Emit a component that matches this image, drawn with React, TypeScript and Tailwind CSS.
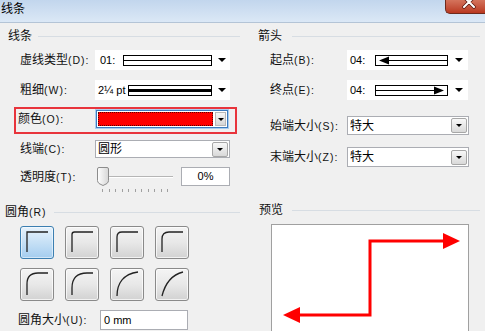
import React from 'react'

const FONT = { fontFamily: '"Liberation Sans", "Noto Sans CJK SC", sans-serif' }

function Caret({ small }: { small?: boolean }) {
  return small ? (
    <span className="h-0 w-0 border-x-[3px] border-t-[3px] border-x-transparent border-t-black" />
  ) : (
    <span className="h-0 w-0 border-x-[4px] border-t-[4px] border-x-transparent border-t-black" />
  )
}

function DropButton() {
  return (
    <div className="flex h-[15px] w-[16px] items-center justify-center rounded-[2px] border border-[#a7a7a7] bg-linear-to-b from-[#f8f8f8] to-[#d9d9d9]">
      <Caret small />
    </div>
  )
}

function Label({ text, keyName, width }: { text: string; keyName: string; width: string }) {
  return (
    <div className={`${width} shrink-0 whitespace-nowrap text-[12px] leading-none text-[#111]`}>
      {text}
      <span className="text-[10.5px] tracking-[1px]">({keyName}):</span>
    </div>
  )
}

function SectionHeader({ title, pad, gap }: { title: React.ReactNode; pad: string; gap: string }) {
  return (
    <div className={`flex h-[14px] items-center pr-[5px] ${pad}`}>
      <span className="whitespace-nowrap text-[12px] leading-none text-[#111]">{title}</span>
      <div className={`h-px flex-1 bg-[#d7dde3] ${gap}`} />
    </div>
  )
}

function SelectBox({ value, width, height }: { value: string; width: string; height: string }) {
  return (
    <div className={`flex ${width} ${height} items-center justify-between border border-[#abadb3] bg-white pl-[2px] pr-px`}>
      <span className="text-[12px] leading-none text-black">{value}</span>
      <DropButton />
    </div>
  )
}

function CornerButton({ d, selected }: { d: string; selected?: boolean }) {
  return (
    <div
      className={
        selected
          ? 'h-[33px] w-[34px] rounded-[3px] border border-[#3c7fb1] bg-linear-to-b from-[#e8f3fc] to-[#a4cdef] shadow-[inset_0_0_0_1px_rgba(255,255,255,0.5)]'
          : 'h-[33px] w-[34px] rounded-[3px] border border-[#8a8a8a] bg-linear-to-b from-[#f4f4f4] via-[#e8e8e8] to-[#d2d2d2] shadow-[inset_0_0_0_1px_rgba(255,255,255,0.7)]'
      }
    >
      <svg width="32" height="31" viewBox="0 0 32 31">
        <path d={d} fill="none" stroke="#222" strokeWidth="1.3" />
      </svg>
    </div>
  )
}

const corners = [
  'M6 25 V5 H27',
  'M6 25 V7.5 Q6 5 8.5 5 H27',
  'M6 25 V10 Q6 5 11 5 H27',
  'M6 25 V12 Q6 5 13 5 H27',
  'M6 26 V15 Q6 4 17 4 H27',
  'M6 26 V19 Q6 4 21 4 H27',
  'M6 27 C6 15 12 5 27 3',
  'M6 27 C9 15 15 6 27 3',
]

function LineStyleCombo({
  prefix,
  prefixWidth,
  pad,
  boxWidth,
  width,
  children,
}: {
  prefix: string
  prefixWidth: string
  pad: string
  boxWidth: string
  width: string
  children: React.ReactNode
}) {
  return (
    <div className={`flex h-[20px] ${width} items-center bg-white ${pad}`}>
      <span className={`${prefixWidth} whitespace-nowrap text-[11px] leading-none text-black`}>{prefix}</span>
      <div className={`relative flex h-[11px] ${boxWidth} items-center border border-black`}>{children}</div>
      <div className="flex flex-1 justify-center pl-[2px]">
        <Caret />
      </div>
    </div>
  )
}

function Ticks() {
  return (
    <div className="ml-[7px] flex w-[66px] justify-between">
      {Array.from({ length: 11 }).map((_, i) => (
        <div key={i} className="h-[3px] w-px bg-[#a0a0a0]" />
      ))}
    </div>
  )
}

export default function App() {
  return (
    <div className="relative h-[331px] w-[485px] overflow-hidden bg-[#f0f0f0]" style={FONT}>
      {/* Title bar */}
      <div className="flex h-[23px] items-start justify-between border-b border-[#b4c4d6] bg-linear-to-b from-[#c2d6ed] to-[#dbe8f6]">
        <span className="ml-px mt-[2px] text-[12px] leading-[14px] text-black">线条</span>
        <div className="relative h-[14px] w-[40px] overflow-hidden rounded-bl-[5px] border-b border-l border-[#6e2a1c] bg-linear-to-b from-[#d4735c] to-[#b9371f]">
          <svg className="absolute left-0 top-0" width="40" height="14" viewBox="0 0 40 14">
            <path d="M18 -3 L28 7 M28 -3 L18 7" stroke="#5a1a10" strokeWidth="3.5" strokeLinecap="round" />
            <path d="M18 -3 L28 7 M28 -3 L18 7" stroke="#fff" strokeWidth="2" strokeLinecap="round" />
          </svg>
        </div>
      </div>

      <div className="flex">
        {/* Left column */}
        <div className="flex w-[245px] flex-col">
          <div className="mt-[6px]">
            <SectionHeader title="线条" pad="pl-[8px]" gap="ml-[6px]" />
          </div>

          <div className="mt-[7px] flex h-[20px] items-center pl-[20px]">
            <Label text="虚线类型" keyName="D" width="w-[75px]" />
            <LineStyleCombo prefix="01:" prefixWidth="w-[23px]" pad="pl-[5px]" boxWidth="w-[89px]" width="w-[135px]">
              <div className="h-px w-full bg-black" />
            </LineStyleCombo>
          </div>

          <div className="mt-[10px] flex h-[20px] items-center pl-[20px]">
            <Label text="粗细" keyName="W" width="w-[75px]" />
            <LineStyleCombo prefix="2¼ pt" prefixWidth="w-[30px]" pad="pl-[3px]" boxWidth="w-[84px]" width="w-[135px]">
              <div className="h-[3px] w-full bg-black" />
            </LineStyleCombo>
          </div>

          {/* Highlighted colour row */}
          <div className="ml-[14px] mt-[7px] flex h-[27px] w-[223px] items-start border-2 border-[#e8343c] pl-[2px] pt-px">
            <div className="flex h-[18px] items-center">
              <Label text="颜色" keyName="O" width="w-[78px]" />
            </div>
            <div className="flex h-[18px] w-[132px] items-center border border-[#3d7bbd] bg-white p-px shadow-[0_0_0_1px_#a9cdf0]">
              <div className="h-full flex-1 border border-dotted border-[#5a0000] bg-[#f00]" />
              <div className="ml-[2px] flex h-full w-[11px] items-center justify-center border border-[#b8b8b8] bg-linear-to-b from-[#f6f6f6] to-[#d6d6d6]">
                <Caret small />
              </div>
            </div>
          </div>

          <div className="mt-[6px] flex h-[18px] items-center pl-[20px]">
            <Label text="线端" keyName="C" width="w-[75px]" />
            <SelectBox value="圆形" width="w-[135px]" height="h-[18px]" />
          </div>

          {/* Transparency */}
          <div className="mt-[9px] flex items-start pl-[20px]">
            <div className="flex h-[19px] items-center">
              <Label text="透明度" keyName="T" width="w-[75px]" />
            </div>
            <div className="flex w-[86px] flex-col">
              <div className="flex h-[19px] items-center">
                <svg className="ml-[2px] shrink-0" width="12" height="19" viewBox="0 0 12 19">
                  <defs>
                    <linearGradient id="thumb" x1="0" y1="0" x2="1" y2="0">
                      <stop offset="0" stopColor="#ffffff" />
                      <stop offset="1" stopColor="#d6d6d6" />
                    </linearGradient>
                  </defs>
                  <path
                    d="M2 0.5 H10 Q11.5 0.5 11.5 2 V13.5 Q11.5 15 10 16.5 L6 18.5 L2 16.5 Q0.5 15 0.5 13.5 V2 Q0.5 0.5 2 0.5 Z"
                    fill="url(#thumb)"
                    stroke="#8c8c8c"
                  />
                </svg>
                <div className="w-[64px] border-t border-b border-t-[#b5b5b5] border-b-white" />
              </div>
              <div className="mt-[3px]">
                <Ticks />
              </div>
            </div>
            <div className="flex h-[19px] w-[49px] items-center justify-center border border-[#abadb3] bg-white text-[11px] leading-none text-black">
              0%
            </div>
          </div>

          <div className="mt-[13px]">
            <SectionHeader
              title={
                <>
                  圆角<span className="text-[10.5px] tracking-[1px]">(R)</span>
                </>
              }
              pad="pl-[5px]"
              gap="ml-[7px]"
            />
          </div>

          <div className="ml-[20px] mt-[7px] grid grid-cols-[repeat(4,34px)] gap-x-[11px] gap-y-[9px]">
            {corners.map((d, i) => (
              <CornerButton key={i} d={d} selected={i === 0} />
            ))}
          </div>

          <div className="mt-[9px] flex h-[20px] items-center pl-[18px]">
            <Label text="圆角大小" keyName="U" width="w-[82px]" />
            <div className="flex h-[20px] w-[88px] items-center border border-[#abadb3] bg-white pl-[3px] text-[11px] leading-none text-black">
              0 mm
            </div>
          </div>
        </div>

        {/* Right column */}
        <div className="flex flex-1 flex-col">
          <div className="mt-[6px]">
            <SectionHeader title="箭头" pad="pl-[13px]" gap="ml-[10px]" />
          </div>

          <div className="mt-[7px] flex h-[20px] items-center pl-[25px]">
            <Label text="起点" keyName="B" width="w-[77px]" />
            <LineStyleCombo prefix="04:" prefixWidth="w-[25px]" pad="pl-[3px]" boxWidth="w-[73px]" width="w-[121px]">
              <svg className="absolute left-0 top-0" width="71" height="9" viewBox="0 0 71 9">
                <path d="M3 4.5 L13 0.5 L13 8.5 Z" fill="#000" />
                <path d="M12 4.5 H71" stroke="#000" strokeWidth="1" />
              </svg>
            </LineStyleCombo>
          </div>

          <div className="mt-[10px] flex h-[20px] items-center pl-[25px]">
            <Label text="终点" keyName="E" width="w-[77px]" />
            <LineStyleCombo prefix="04:" prefixWidth="w-[25px]" pad="pl-[3px]" boxWidth="w-[73px]" width="w-[121px]">
              <svg className="absolute left-0 top-0" width="71" height="9" viewBox="0 0 71 9">
                <path d="M0 4.5 H59" stroke="#000" strokeWidth="1" />
                <path d="M68 4.5 L58 0.5 L58 8.5 Z" fill="#000" />
              </svg>
            </LineStyleCombo>
          </div>

          <div className="mt-[16px] flex h-[19px] items-center pl-[25px]">
            <Label text="始端大小" keyName="S" width="w-[77px]" />
            <SelectBox value="特大" width="w-[122px]" height="h-[19px]" />
          </div>

          <div className="mt-[12px] flex h-[20px] items-center pl-[25px]">
            <Label text="末端大小" keyName="Z" width="w-[77px]" />
            <SelectBox value="特大" width="w-[122px]" height="h-[20px]" />
          </div>

          <div className="mt-[36px]">
            <SectionHeader title="预览" pad="pl-[14px]" gap="ml-[9px]" />
          </div>

          <div className="ml-[26px] mt-[7px] h-[120px] w-[198px] border border-[#a0a0a0] bg-white">
            <svg width="196" height="118" viewBox="0 0 196 118">
              <path d="M27 90 H98 V16 H172" fill="none" stroke="#f00" strokeWidth="3" />
              <path d="M11 90 L28 82 L28 98 Z" fill="#f00" />
              <path d="M188 16 L171 8 L171 24 Z" fill="#f00" />
            </svg>
          </div>
        </div>
      </div>
    </div>
  )
}
